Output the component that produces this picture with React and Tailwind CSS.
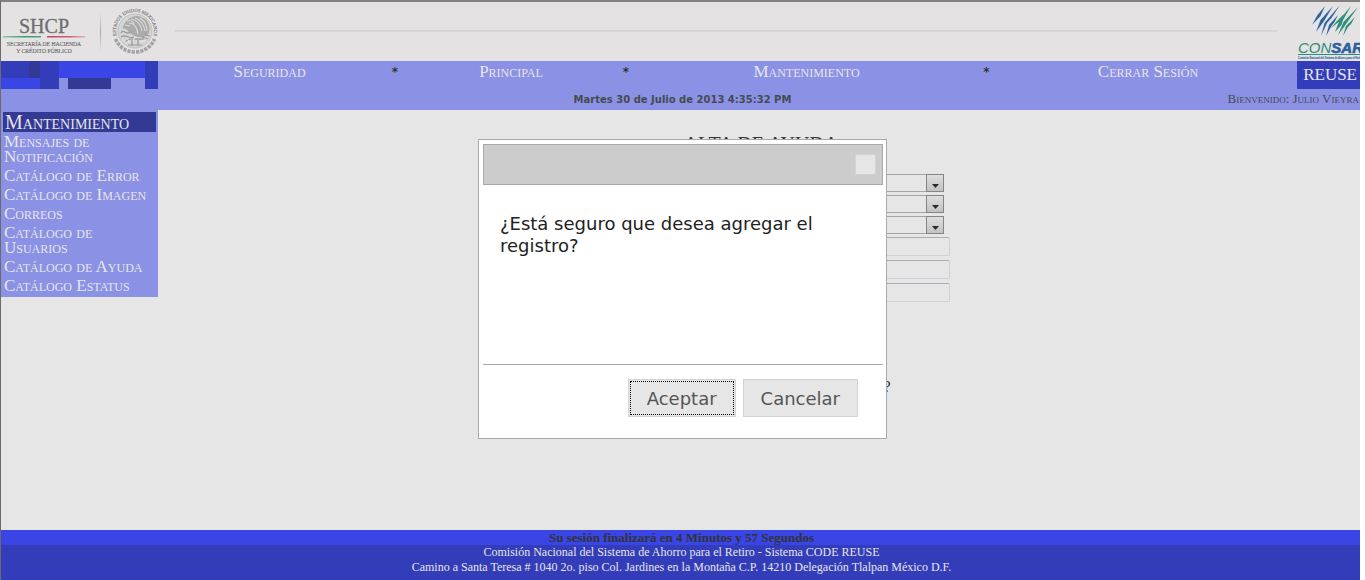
import React from "react";

const serif = "font-['Liberation_Serif',serif]";
const sans = "font-['DejaVu_Sans',sans-serif]";

function ShcpLogo() {
  return (
    <svg width="100" height="54" viewBox="0 0 100 54" role="img" aria-label="SHCP" className={serif}>
      <defs>
        <linearGradient id="green" x1="0" x2="1">
          <stop offset="0" stopColor="#8fc4a5" />
          <stop offset="0.6" stopColor="#3d9a6a" />
          <stop offset="1" stopColor="#4ea378" />
        </linearGradient>
        <linearGradient id="red" x1="0" x2="1">
          <stop offset="0" stopColor="#c8405c" />
          <stop offset="0.6" stopColor="#cf5f76" />
          <stop offset="1" stopColor="#e0b4bc" />
        </linearGradient>
        <linearGradient id="bar" x1="0" x2="0" y1="0" y2="1">
          <stop offset="0" stopColor="#e4e2e3" />
          <stop offset="0.5" stopColor="#aaa8a9" />
          <stop offset="1" stopColor="#e4e2e3" />
        </linearGradient>
      </defs>
      <text x="43" y="27" textAnchor="middle" fontSize="20" fill="#6d6e70" stroke="#6d6e70" strokeWidth="0.3">SHCP</text>
      <rect x="2" y="30" width="38" height="1.5" fill="url(#green)" />
      <rect x="46" y="30" width="38" height="1.5" fill="url(#red)" />
      <text x="43" y="40" textAnchor="middle" fontSize="5.7" fill="#6d6e70" stroke="#6d6e70" strokeWidth="0.15">SECRETARÍA DE HACIENDA</text>
      <text x="43" y="46.5" textAnchor="middle" fontSize="5.7" fill="#6d6e70" stroke="#6d6e70" strokeWidth="0.15">Y CRÉDITO PÚBLICO</text>
      <rect x="99" y="6" width="1" height="40" fill="url(#bar)" />
    </svg>
  );
}

function Seal() {
  return (
    <svg width="48" height="50" viewBox="0 0 48 50" role="img" aria-label="Estados Unidos Mexicanos" className={serif}>
      <defs>
        <path id="sealArc" d="M7.3 34 A19 19 0 1 1 40.7 34" />
      </defs>
      <circle cx="24" cy="25" r="17" fill="#d6d5d5" stroke="#b3b3b2" strokeWidth="0.7" />
      <text fontSize="4.7" textAnchor="middle" fill="#868786" stroke="#868786" strokeWidth="0.2">
        <textPath href="#sealArc" startOffset="50%">ESTADOS UNIDOS MEXICANOS</textPath>
      </text>
      <path d="M4.5 33 C8 41 15 46 24 46 C33 46 40 41 43.5 33" fill="none" stroke="#a2a3a2" strokeWidth="3.6" strokeDasharray="3.2 1.1" />
      <path d="M12 21 C15 12 24 8 30 11 C37 13 40 20 38 27 C35 32 29 32 24 30 C20 29 17 25 15 23 C13 22 12 24 12 21Z" fill="#aaabaa" />
      <path d="M16 15 C19 14 22 15 23 18 M14 19 l5 1 M20 13 c6 1 10 5 11 12 M24 12 c6 2 9 6 10 13 M29 12 c5 3 7 8 7 13 M18 17 c5 0 8 4 9 11" fill="none" stroke="#dddcdc" strokeWidth="1.1" />
      <path d="M10 27 C12 22 16 30 19 26 M10 31 c5 -4 8 3 13 0 M14 36 c4 -5 10 -2 19 -3 M17 39 h14 M21 34 v6 M27 34 v6 M31 31 l6 2 M34 29 l5 1" fill="none" stroke="#979897" strokeWidth="1.2" />
      <path d="M12 34 l4 3 M16 32 l3 5 M29 36 l6 -2 M24 31 l-2 4" fill="none" stroke="#efeeee" strokeWidth="0.8" />
    </svg>
  );
}

function ConsarLogo() {
  return (
    <svg width="62" height="58" viewBox="0 0 62 58" role="img" aria-label="CONSAR" className="shrink-0 overflow-hidden font-['Liberation_Sans',sans-serif]">
      <g fill="#2f64a0">
        <path d="M27 4 L22.5 14 L14 23 L19.5 13 Z" />
        <path d="M35 4 L26 19 L18 30 L22.5 18 Z" />
        <path d="M42 3 L33.5 16 L29 21 L23 34 L26.5 21 Z" />
        <path d="M40 13 L36.5 20 L33.5 24 L28 34 L31 23 Z" />
      </g>
      <g fill="#2f8f7a">
        <path d="M46 12 L42 19 L33 26 L38 20 Z" />
        <path d="M53 4 L45 18 L43.5 23 L37 30 L42 17 Z" />
        <path d="M60 5 L51.5 17 L46 25 L40 33 L45.5 20 Z" />
        <path d="M57 15 L53 22 L50 25 L45 34 L48 24 Z" />
      </g>
      <text x="0" y="51" fontSize="15" fontStyle="italic" fill="#2f8f7a">
        CON
        <tspan fontWeight="bold" fill="#2a5f9e" stroke="#2a5f9e" strokeWidth="0.6">SAR</tspan>
      </text>
      <rect x="0" y="52" width="62" height="1" fill="#2f8f7a" />
      <text x="0" y="57" fontSize="2.6" fill="#3e6ea6" stroke="#3e6ea6" strokeWidth="0.15">Comisión Nacional del Sistema de Ahorro para el Retiro</text>
    </svg>
  );
}

function Blocks() {
  return (
    <svg width="157" height="28" viewBox="0 0 157 28" aria-hidden="true" className="block">
      <rect width="28" height="17" fill="#333dba" />
      <rect x="28" width="11" height="17" fill="#333a96" />
      <rect y="17" width="39" height="11" fill="#3945e5" />
      <rect x="39" width="19" height="28" fill="#333dba" />
      <rect x="58" width="86" height="17" fill="#3945e5" />
      <rect x="67" y="17" width="43" height="11" fill="#333a96" />
      <rect x="144" width="13" height="28" fill="#333dba" />
    </svg>
  );
}

const navItems = ["Seguridad", "Principal", "Mantenimiento", "Cerrar Sesión"];

const menuItems = [
  "Mensajes de Notificación",
  "Catálogo de Error",
  "Catálogo de Imagen",
  "Correos",
  "Catálogo de Usuarios",
  "Catálogo de Ayuda",
  "Catálogo Estatus",
];

function SelectBox({ label }) {
  return (
    <div className="grid w-[200px] grid-cols-[1fr_18px] grid-rows-[18px]">
      <select aria-label={label} className="col-span-2 col-start-1 row-start-1 h-full w-full appearance-none rounded-none border border-[#a5a5a9] bg-[#e6e6e6]" />
      <span className="pointer-events-none col-start-2 row-start-1 flex items-end justify-center border border-[#858585] bg-linear-to-b from-[#dedede] to-[#c2c2c2] pb-[3px]">
        <svg width="7" height="4" viewBox="0 0 7 4" aria-hidden="true">
          <path d="M0 0 H7 L3.5 4 Z" fill="#2b2b2b" />
        </svg>
      </span>
    </div>
  );
}

function Dialog() {
  return (
    <div className="fixed inset-0 flex items-center justify-center">
      <div role="dialog" aria-modal="true" aria-describedby="question" className={`${sans} mb-0.5 flex h-[300px] w-[409px] flex-col border border-[#aaaaaa] bg-white py-1 pr-[3px] pl-1 text-lg`}>
        <div className="flex h-[41px] items-center justify-end border border-[#aaaaaa] bg-[#cccccc] pr-1.5">
          <button type="button" aria-label="Cerrar" className="size-[21px] border border-[#d3d3d3] bg-[#e6e6e6]" />
        </div>
        <p id="question" className="flex-1 px-[17px] pt-7 leading-[22px] text-[#222222]">
          ¿Está seguro que desea agregar el registro?
        </p>
        <div className="flex justify-end gap-[7px] border-t border-[#aaaaaa] pt-3.5 pr-[25px] pb-[17px] text-[#555555]">
          <button type="button" className="h-[38px] border border-[#d3d3d3] bg-[#e6e6e6] p-px">
            <span className="flex h-full items-center border border-dotted border-black px-4 pt-px">Aceptar</span>
          </button>
          <button type="button" className="h-[38px] border border-[#d3d3d3] bg-[#e6e6e6] px-[17px] pt-px">Cancelar</button>
        </div>
      </div>
    </div>
  );
}

export default function App() {
  return (
    <div className={`${serif} min-h-screen bg-white pr-[5px]`}>
      <div className="flex min-h-screen flex-col border-t-2 border-l border-t-[#838180] border-l-[#6b6b6b] bg-[#e6e6e6]">
        <header>
          <div className="flex h-[59px] items-start bg-[#e4e2e3]">
            <div className="flex shrink-0 gap-2.5 pt-1">
              <ShcpLogo />
              <Seal />
            </div>
            <div className="mt-7 mr-[21px] ml-4 h-0.5 flex-1 bg-[#d6d4d5]" />
            <ConsarLogo />
          </div>
          <div className="flex h-[49px] bg-[#8b91e5]">
            <Blocks />
            <div className="flex flex-1 flex-col">
              <nav className="grid h-[30px] grid-cols-[223fr_28fr_204fr_26fr_335fr_25fr_298fr] pt-0.5 text-center text-[17px] leading-[18px] text-[#e6e6e6] [font-variant:small-caps]">
                {navItems.map((item, i) => (
                  <React.Fragment key={item}>
                    {i > 0 && <span className={`${sans} text-xs leading-[18px] font-bold text-[#333333]`}>*</span>}
                    <a href="#">{item}</a>
                  </React.Fragment>
                ))}
              </nav>
              <p className={`${sans} pr-[90px] text-center text-[10px] leading-[18px] font-bold text-[#444c50]`}>
                Martes 30 de Julio de 2013 4:35:32 PM
              </p>
            </div>
            <div className="flex w-[63px] flex-col items-end">
              <div className="flex h-7 w-full items-center justify-end bg-[#333dba] pr-[3px] text-[17px] text-[#e6e6e6]">REUSE</div>
              <p className="pt-0.5 pr-px text-[13px] leading-4 whitespace-nowrap text-[#444c50] [font-variant:small-caps]">
                Bienvenido: Julio Vieyra
              </p>
            </div>
          </div>
        </header>

        <div className="flex flex-1 items-start">
          <aside className="w-[157px] bg-[#8b91e5] px-0.5 pt-0.5 text-[#e6e6e6] [font-variant:small-caps]">
            <h2 className="bg-[#333a96] px-0.5 text-xl leading-5">Mantenimiento</h2>
            <ul className="px-px pb-0.5 text-[17px] leading-[15px]">
              {menuItems.map((item) => (
                <li key={item} className="py-0.5 pr-1">
                  <a href="#">{item}</a>
                </li>
              ))}
            </ul>
          </aside>
          <main className="flex flex-1 flex-col items-center pt-5">
            <h1 className="pl-1 text-xl leading-7 text-[#333333] uppercase">Alta de Ayuda</h1>
            <form className="flex flex-col gap-[3px] pt-4 pl-[176px]">
              <SelectBox label="Campo 1" />
              <SelectBox label="Campo 2" />
              <SelectBox label="Campo 3" />
              {["Campo 4", "Campo 5", "Campo 6"].map((label) => (
                <input key={label} type="text" aria-label={label} className="mb-px h-[19px] w-[206px] rounded-xs border border-[#cdd2d8] border-t-[#abadb3] bg-[#e6e6e6]" />
              ))}
            </form>
            <p className="pt-[74px] pl-[256px] text-base leading-5 text-[#333333]">?</p>
          </main>
        </div>

        <footer className="bg-[#333dba] pb-[5px] text-center text-xs leading-[15px] text-[#e6e6e6]">
          <p className="bg-[#3945e5] pl-0.5 text-[13px] leading-[15px] font-bold text-[#333333]">Su sesión finalizará en 4 Minutos y 57 Segundos</p>
          <p className="pl-0.5">Comisión Nacional del Sistema de Ahorro para el Retiro - Sistema CODE REUSE</p>
          <p className="pl-0.5">Camino a Santa Teresa # 1040 2o. piso Col. Jardines en la Montaña C.P. 14210 Delegación Tlalpan México D.F.</p>
        </footer>
      </div>
      <Dialog />
    </div>
  );
}
